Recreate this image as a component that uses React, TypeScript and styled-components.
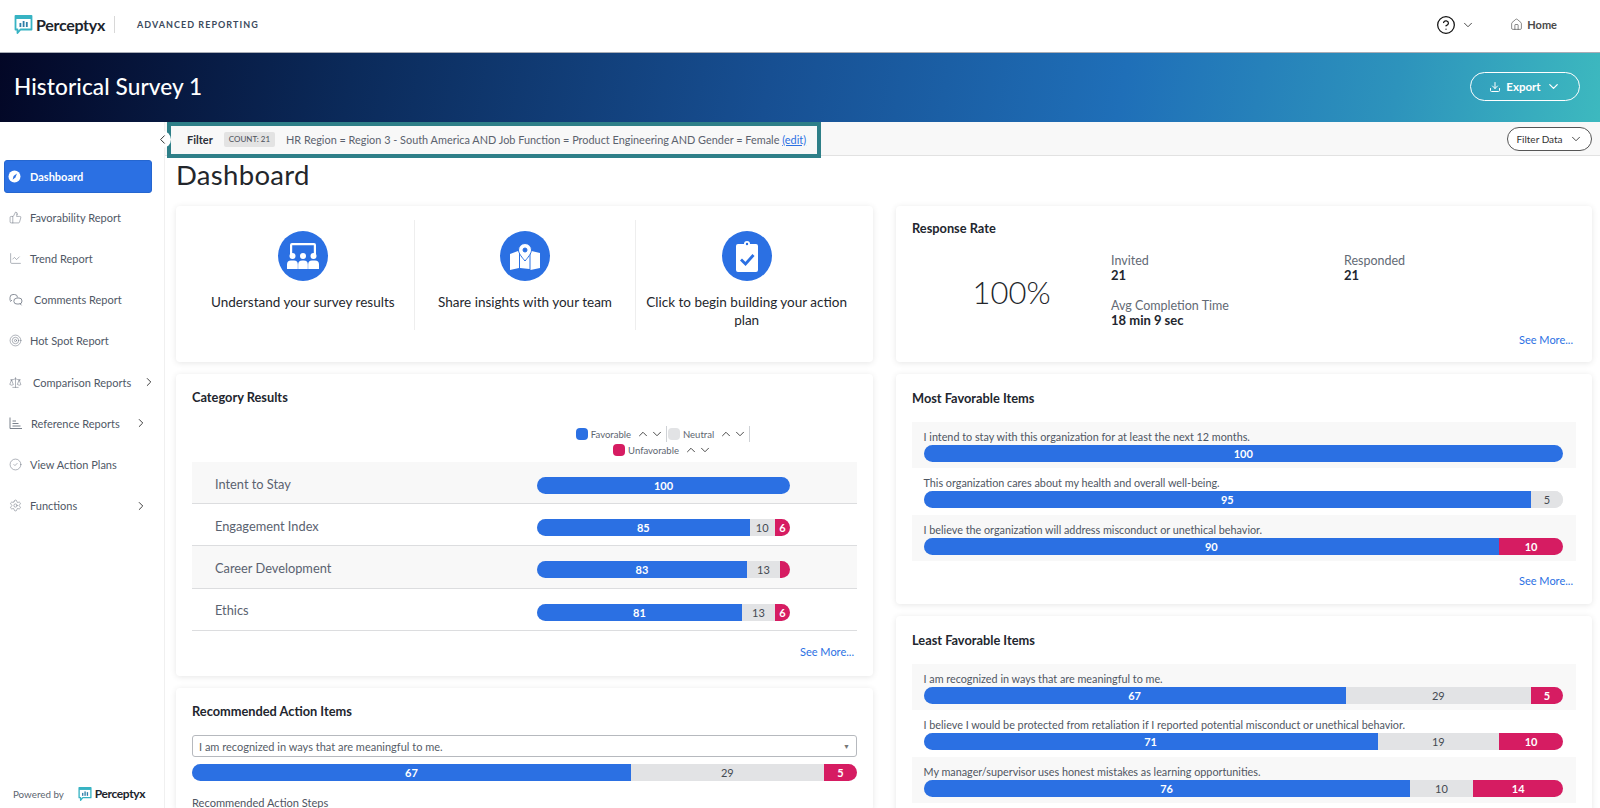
import React from "react";
import styled, { createGlobalStyle } from "styled-components";
import {
  ThumbsUp, ChartLine, Target, Scale, CircleCheck, Settings,
  House, Download, ChevronDown, ChevronUp, ChevronRight, ChevronLeft, CircleHelp,
} from "lucide-react";

const Global = createGlobalStyle`
  html, body { margin: 0; padding: 0; background: #fff; }
  body { font-family: Lato, "Liberation Sans", sans-serif; color: #22262e; }
  * { box-sizing: border-box; }
`;

const Page = styled.div`
  width: 1600px; height: 808px; overflow: hidden;
  display: flex; flex-direction: column;
`;
const TopBar = styled.header`
  height: 52px; flex: none; display: flex; align-items: center;
  padding: 0 43px 3px 14px; background: #fff;
`;
const Wordmark = styled.span<{ $size: number; $track: number }>`
  font-size: ${p => p.$size}px; font-weight: 700; color: #20242c; margin-left: 3px; letter-spacing: ${p => p.$track}px;
`;
const Divider = styled.span`
  width: 1px; height: 17px; background: #d8d8d8; margin: 0 22px 0 9px;
`;
const Product = styled.span`
  font-size: 9px; font-weight: 700; letter-spacing: 1.05px; color: #3b4a5c;
`;
const TopRight = styled.div`
  margin-left: auto; display: flex; align-items: center; color: #333;
`;
const HelpArrow = styled.span`
  display: flex; margin-left: 5px;
`;
const HomeLink = styled.span`
  display: flex; align-items: center; gap: 4px; margin-left: 35px;
  font-size: 11px; font-weight: 700; color: #4a4a4a;
`;
const Banner = styled.div`
  height: 70px; flex: none; display: flex; align-items: center; justify-content: space-between;
  padding: 0 20px 2px 14px; border-top: 1px solid #a9adb6;
  background: linear-gradient(100deg, #030726 0%, #0b2a5a 22%, #174f92 48%, #1f6fb8 70%, #2d93bc 87%, #3db9bf 100%);
`;
const BannerTitle = styled.h1`
  margin: 0; font-size: 22.6px; font-weight: 500; color: #fff; letter-spacing: 0.1px;
`;
const ExportButton = styled.button`
  width: 110px; height: 29px; border: 1px solid #fff; border-radius: 15px; background: transparent;
  display: flex; align-items: center; justify-content: center; gap: 5px;
  font: 700 11.5px Lato, sans-serif; color: #fff;
`;
const Body = styled.div`
  flex: 1; min-height: 0; display: flex;
`;
const Sidebar = styled.nav`
  width: 165px; flex: none; border-right: 1px solid #f0f0f0; position: relative;
  display: flex; flex-direction: column; padding: 38px 12px 7px 4px;
`;
const Collapse = styled.span`
  position: absolute; top: 9px; right: -7px; width: 17px; height: 17px; border-radius: 50%;
  background: #fff; display: flex; align-items: center; justify-content: center; color: #333; z-index: 2;
`;
const ActiveItem = styled.a`
  height: 33px; border-radius: 3px; background: #2b70e3; color: #fff; border: 1px solid #2566d0;
  display: flex; align-items: center; gap: 8px; padding-left: 2px; margin-bottom: 4px;
  font-size: 11px; font-weight: 700;
`;
const Item = styled.a<{ $wide?: boolean }>`
  height: 41.15px; flex: none; display: flex; align-items: center; gap: ${p => (p.$wide ? 11 : 8)}px; padding-left: 5px;
  font-size: 11px; color: #4f5866; white-space: nowrap;
  svg { flex: none; }
`;
const ItemArrow = styled.span`
  margin-left: auto; margin-right: 4px; display: flex; color: #333;
`;
const Footer = styled.div`
  margin-top: auto; display: flex; align-items: center; padding: 0 0 0 9px;
  font-size: 9.8px; color: #5d6570; white-space: nowrap;
`;
const FooterLogo = styled.span`
  display: flex; align-items: center; margin-left: 14px;
`;
const Main = styled.main`
  flex: 1; min-width: 0; display: flex; flex-direction: column;
`;
const FilterBar = styled.div`
  height: 34px; flex: none; background: #f8f8f8; border-bottom: 1px solid #e2e2e2;
  display: flex; align-items: flex-start; padding: 0 8px 0 2px;
`;
const FilterBox = styled.div`
  height: 36px; border: 4px solid #2e7f88; display: flex; align-items: center; padding: 0 11px 2px 16px;
  position: relative; z-index: 1; background: #f8f8f8;
`;
const FilterLabel = styled.b`
  font-size: 11px; color: #2c3038; margin-right: 11px;
`;
const Count = styled.span`
  background: #e3e3e3; border-radius: 2px; padding: 0 5px; height: 15px; line-height: 15px;
  font-size: 8px; color: #4a4f58; margin-right: 11px;
`;
const FilterText = styled.span`
  font-size: 10.9px; color: #5b626e; white-space: nowrap;
  a { color: #2b70e3; text-decoration: underline; }
`;
const FilterButton = styled.button`
  margin: 5px 0 0 auto; width: 85px; height: 24px; border: 1px solid #555; border-radius: 12px; background: #fff;
  display: flex; align-items: center; justify-content: center; gap: 6px;
  font: 400 10px Lato, sans-serif; color: #333;
`;
const Content = styled.div`
  flex: 1; min-height: 0; overflow: hidden; padding: 2px 8px 0 11px;
`;
const PageTitle = styled.h2`
  margin: 0 0 14px; font-size: 27.5px; line-height: 34px; font-weight: 400; color: #23262b; letter-spacing: 0.3px;
`;
const Columns = styled.div`
  display: grid; grid-template-columns: 697px 696px; gap: 23px;
`;
const Column = styled.div`
  display: flex; flex-direction: column; gap: 12px;
`;
const Card = styled.section<{ $h?: number; $pt?: number }>`
  background: #fff; border-radius: 4px; box-shadow: 0 1px 6px rgba(0,0,0,.1);
  padding: ${p => p.$pt ?? 16}px 16px 0;
  height: ${p => (p.$h ? `${p.$h}px` : "auto")};
  display: flex; flex-direction: column;
`;
const CardTitle = styled.h3`
  margin: 0; font-size: 12.8px; line-height: 16px; font-weight: 700; color: #22262e;
`;
const Actions = styled.div`
  display: grid; grid-template-columns: repeat(3, 1fr); margin-top: -2px; height: 110px;
`;
const Action = styled.div`
  display: flex; flex-direction: column; align-items: center; text-align: center; padding: 11px 6px 0;
  font-size: 13.5px; line-height: 18px; color: #24272d;
  & + & { border-left: 1px solid #eeeeee; }
`;
const ActionCircle = styled.span`
  width: 50px; height: 50px; border-radius: 50%; background: #2b70e3; display: flex;
  align-items: center; justify-content: center; margin-bottom: 12px; flex: none;
`;
const Response = styled.div`
  display: grid; grid-template-columns: 199px 233px 1fr; grid-auto-rows: 45px; margin-top: 18px; height: 75px;
`;
const BigNumber = styled.div`
  font-size: 31px; font-weight: 300; color: #23262b; text-align: center;
  align-self: center; grid-row: 1 / 3; margin: 0 0 14px;
`;
const Stat = styled.div`
  font-size: 12.5px; line-height: 14px; color: #636a75;
  b { display: block; color: #22262e; font-size: 13px; font-weight: 700; }
`;
const SeeMore = styled.a<{ $top: number }>`
  align-self: flex-end; font-size: 11px; line-height: 14px; color: #2b70e3; margin: ${p => p.$top}px 3px 0 0;
`;
const Legend = styled.div`
  display: grid; grid-template-columns: 1fr 253px; padding-right: 67px; margin: 21px 0 4px;
`;
const LegendInner = styled.div`
  grid-column: 2; display: flex; flex-wrap: wrap; justify-content: center; margin: 0 -10px;
`;
const LegendItem = styled.span<{ $sep?: boolean }>`
  height: 16px; display: flex; align-items: center; gap: 3px; padding: 0 2px 0 0; font-size: 9.5px; color: #5d6570;
  border-right: ${p => (p.$sep ? "1px solid #cfd2d6" : "none")};
  margin-right: ${p => (p.$sep ? 1 : 0)}px;
`;
const Swatch = styled.i<{ $c: string }>`
  width: 12px; height: 12px; border-radius: 4px; background: ${p => p.$c}; display: block;
`;
const Sorters = styled.span`
  display: flex; gap: 0; margin-left: 2px; color: #333;
`;
const CatRow = styled.div<{ $tint: boolean }>`
  height: 42.2px; flex: none; display: grid; grid-template-columns: 1fr 253px; align-items: center;
  padding: 0 67px 0 23px; background: ${p => (p.$tint ? "#f8f8f8" : "#fff")};
  border-bottom: 1px solid #dcdddf; font-size: 12.8px; color: #5a6270;
`;
const CatLabel = styled.span`
  margin-top: 2px;
`;
const CatBar = styled.div`
  margin-top: 6px;
`;
const Bar = styled.div`
  display: flex; height: 17px; border-radius: 9px; overflow: hidden; font-size: 11px; line-height: 17px;
  text-align: center; background: #e2e3e5;
`;
const Segment = styled.span<{ $c: "f" | "n" | "u" }>`
  min-width: 0; display: block;
  background: ${p => ({ f: "#2b70e3", n: "#e2e3e5", u: "#d61c62" }[p.$c])};
  color: ${p => (p.$c === "n" ? "#444a52" : "#fff")};
  font-weight: ${p => (p.$c === "n" ? 400 : 700)};
`;
const ItemList = styled.div`
  margin-top: 16px; display: flex; flex-direction: column;
`;
const ItemRow = styled.div<{ $tint: boolean }>`
  height: 46.3px; padding: 7px 13px 0 11.5px; background: ${p => (p.$tint ? "#f8f8f8" : "#fff")};
  font-size: 10.8px; line-height: 16px; color: #4f5662;
`;
const Select = styled.div`
  height: 22px; margin-top: 16px; border: 1px solid #b6b9be; border-radius: 3px; display: flex;
  align-items: center; justify-content: space-between; padding: 0 6px; font-size: 11px; color: #565d68;
`;
const Caret = styled.span`
  font-size: 7px; color: #777;
`;
const SpacedBar = styled.div`
  margin-top: 7px;
`;
const Steps = styled.div`
  margin-top: 14px; font-size: 11.1px; color: #4f5662; line-height: 15px;
`;

const Logo = ({ size }: { size: number }) => (
  <svg width={size} height={size} viewBox="0 0 18 19" fill="none" aria-hidden>
    <path d="M1 1h16v13.5H6L3 18v-3.5H1z" fill="#fff" stroke="#37b3c3" strokeWidth="1.8" strokeLinejoin="round" />
    <path d="M1 1h16v3H1z" fill="#37b3c3" />
    <rect x="5" y="8" width="1.8" height="4" fill="#2f7fa8" />
    <rect x="8.2" y="6" width="1.8" height="6" fill="#2f7fa8" />
    <rect x="11.4" y="7" width="1.8" height="5" fill="#2f7fa8" />
  </svg>
);
const Compass = () => (
  <svg width="15" height="15" viewBox="0 0 15 15" aria-hidden>
    <circle cx="7.5" cy="7.5" r="6" fill="#fff" />
    <path d="M10 4.500 8.400 8.600 5.600 10.800 6.600 7z" fill="#2b70e3" />
  </svg>
);
const CommentsIcon = () => (
  <svg width="14" height="14" viewBox="0 0 14 14" fill="none" stroke="#6c7480" strokeWidth="0.8" aria-hidden>
    <path d="M1 7.500V4.500A3 3 0 0 1 4 1.500h1.500a3 3 0 0 1 3 2.800M3 7.200 1 8.500" />
    <path d="M7.500 5h2.500a3 3 0 0 1 0 6H8a2.800 2.800 0 0 1-.5-5.800z" />
    <path d="M11 10.700l1.500 1.600" />
  </svg>
);
const ReferenceIcon = () => (
  <svg width="14" height="14" viewBox="0 0 14 14" fill="none" stroke="#6c7480" strokeWidth="0.9" aria-hidden>
    <path d="M1 1.500V12.500H13" />
    <path d="M3.500 5h3.500M3.500 7.500h6M3.500 10h8" />
  </svg>
);
const PresenterIcon = () => (
  <svg width="32" height="26" viewBox="0 0 32 26" fill="#fff" aria-hidden>
    <path d="M3 11V2a2 2 0 0 1 2-2h22a2 2 0 0 1 2 2v9h-2.200V2.200H5.200V11z" />
    <circle cx="5.500" cy="13" r="3" /><circle cx="16" cy="13" r="3" /><circle cx="26.500" cy="13" r="3" />
    <path d="M0 26v-4.500A4 4 0 0 1 4 17.500h3a4 4 0 0 1 3.800 4V26z" />
    <path d="M11.200 26v-4.500a4 4 0 0 1 4-4h1.600a4 4 0 0 1 4 4V26z" />
    <path d="M32 26v-4.500a4 4 0 0 0-4-4h-3a4 4 0 0 0-3.800 4V26z" />
  </svg>
);
const MapIcon = () => (
  <svg width="30" height="27" viewBox="0 0 30 27" fill="#fff" aria-hidden>
    <path d="M0 11l8-3 1 1v16L0 27z" />
    <path d="M10 10l5 7 4.500-7v16L10 25z" />
    <path d="M20.500 9l1-1L30 10v15l-9.500 2z" />
    <path fillRule="evenodd" stroke="#2b70e3" strokeWidth="1" d="M15 0.500a6.500 6.500 0 0 1 6.500 6.500c0 3.500-4 8-6.500 11-2.500-3-6.500-7.500-6.500-11A6.500 6.500 0 0 1 15 0.500zm0 4.500a2 2 0 1 0 0 4 2 2 0 0 0 0-4z" />
  </svg>
);
const ClipboardIcon = () => (
  <svg width="22" height="31" viewBox="0 0 22 31" aria-hidden>
    <path fill="#fff" fillRule="evenodd" d="M2 3h6a3 3 0 0 1 6 0h6a2 2 0 0 1 2 2v24a2 2 0 0 1-2 2H2a2 2 0 0 1-2-2V5a2 2 0 0 1 2-2zm9-1.200a1.200 1.200 0 1 0 0 2.400 1.200 1.200 0 0 0 0-2.400z" />
    <path d="M5 18.500l4.500 4.500 8-9" fill="none" stroke="#2b70e3" strokeWidth="2.800" />
  </svg>
);

type Seg = [number, "f" | "n" | "u", string?];
const Stack = ({ segs }: { segs: Seg[] }) => (
  <Bar>
    {segs.map(([v, c, label], i) => (
      <Segment key={i} $c={c} style={{ flex: `${v} 1 0` }}>{label ?? v}</Segment>
    ))}
  </Bar>
);

const Lucide = (I: typeof Target) => () => <I size={13} strokeWidth={1} color="#6c7480" />;
const nav = [
  { t: "Favorability Report", I: Lucide(ThumbsUp) },
  { t: "Trend Report", I: Lucide(ChartLine) },
  { t: "Comments Report", I: CommentsIcon, wide: true },
  { t: "Hot Spot Report", I: Lucide(Target) },
  { t: "Comparison Reports", I: Lucide(Scale), wide: true, arrow: true },
  { t: "Reference Reports", I: ReferenceIcon, arrow: true },
  { t: "View Action Plans", I: Lucide(CircleCheck) },
  { t: "Functions", I: Lucide(Settings), arrow: true },
];
const cats: { t: string; s: Seg[] }[] = [
  { t: "Intent to Stay", s: [[100, "f"]] },
  { t: "Engagement Index", s: [[84, "f", "85"], [10, "n"], [6, "u"]] },
  { t: "Career Development", s: [[83, "f"], [13, "n"], [4, "u", ""]] },
  { t: "Ethics", s: [[81, "f"], [13, "n"], [6, "u"]] },
];
const most: { t: string; s: Seg[] }[] = [
  { t: "I intend to stay with this organization for at least the next 12 months.", s: [[100, "f"]] },
  { t: "This organization cares about my health and overall well-being.", s: [[95, "f"], [5, "n"]] },
  { t: "I believe the organization will address misconduct or unethical behavior.", s: [[90, "f"], [10, "u"]] },
];
const least: { t: string; s: Seg[] }[] = [
  { t: "I am recognized in ways that are meaningful to me.", s: [[66, "f", "67"], [29, "n"], [5, "u"]] },
  { t: "I believe I would be protected from retaliation if I reported potential misconduct or unethical behavior.", s: [[71, "f"], [19, "n"], [10, "u"]] },
  { t: "My manager/supervisor uses honest mistakes as learning opportunities.", s: [[76, "f"], [10, "n"], [14, "u"]] },
];

const LegendEntry = ({ c, t, sep }: { c: string; t: string; sep?: boolean }) => (
  <LegendItem $sep={sep}>
    <Swatch $c={c} />{t}
    <Sorters>
      <ChevronUp size={14} strokeWidth={1.5} />
      <ChevronDown size={14} strokeWidth={1.5} />
    </Sorters>
  </LegendItem>
);

const Items = ({ rows }: { rows: { t: string; s: Seg[] }[] }) => (
  <ItemList>
    {rows.map((r, i) => (
      <ItemRow key={r.t} $tint={i % 2 === 0}>
        {r.t}
        <Stack segs={r.s} />
      </ItemRow>
    ))}
  </ItemList>
);

export default function App() {
  return (
    <Page>
      <Global />
      <TopBar>
        <Logo size={19} />
        <Wordmark $size={16} $track={-0.3}>Perceptyx</Wordmark>
        <Divider />
        <Product>ADVANCED REPORTING</Product>
        <TopRight>
          <CircleHelp size={20} strokeWidth={1.5} color="#111" />
          <HelpArrow><ChevronDown size={14} strokeWidth={1.5} /></HelpArrow>
          <HomeLink><House size={13} strokeWidth={1.2} />Home</HomeLink>
        </TopRight>
      </TopBar>
      <Banner>
        <BannerTitle>Historical Survey 1</BannerTitle>
        <ExportButton><Download size={12} />Export<ChevronDown size={15} /></ExportButton>
      </Banner>
      <Body>
        <Sidebar>
          <Collapse><ChevronLeft size={15} strokeWidth={1.6} /></Collapse>
          <ActiveItem><Compass />Dashboard</ActiveItem>
          {nav.map(({ t, I, wide, arrow }) => (
            <Item key={t} $wide={wide}>
              <I />
              {t}
              {arrow && <ItemArrow><ChevronRight size={14} strokeWidth={1.6} /></ItemArrow>}
            </Item>
          ))}
          <Footer>
            Powered by
            <FooterLogo><Logo size={14} /><Wordmark $size={12} $track={-0.4}>Perceptyx</Wordmark></FooterLogo>
          </Footer>
        </Sidebar>
        <Main>
          <FilterBar>
            <FilterBox>
              <FilterLabel>Filter</FilterLabel>
              <Count>COUNT: 21</Count>
              <FilterText>
                HR Region = Region 3 - South America AND Job Function = Product Engineering AND Gender = Female <a>(edit)</a>
              </FilterText>
            </FilterBox>
            <FilterButton>Filter Data<ChevronDown size={14} strokeWidth={1.5} /></FilterButton>
          </FilterBar>
          <Content>
            <PageTitle>Dashboard</PageTitle>
            <Columns>
              <Column>
                <Card $h={156}>
                  <Actions>
                    <Action><ActionCircle><PresenterIcon /></ActionCircle>Understand your survey results</Action>
                    <Action><ActionCircle><MapIcon /></ActionCircle>Share insights with your team</Action>
                    <Action><ActionCircle><ClipboardIcon /></ActionCircle>Click to begin building your action plan</Action>
                  </Actions>
                </Card>
                <Card $h={302} $pt={15}>
                  <CardTitle>Category Results</CardTitle>
                  <Legend>
                    <LegendInner>
                      <LegendEntry c="#2b70e3" t="Favorable" sep />
                      <LegendEntry c="#e2e3e5" t="Neutral" sep />
                      <LegendEntry c="#d61c62" t="Unfavorable" />
                    </LegendInner>
                  </Legend>
                  {cats.map((c, i) => (
                    <CatRow key={c.t} $tint={i % 2 === 0}>
                      <CatLabel>{c.t}</CatLabel>
                      <CatBar><Stack segs={c.s} /></CatBar>
                    </CatRow>
                  ))}
                  <SeeMore $top={14}>See More...</SeeMore>
                </Card>
                <Card $pt={15}>
                  <CardTitle>Recommended Action Items</CardTitle>
                  <Select>I am recognized in ways that are meaningful to me.<Caret>▼</Caret></Select>
                  <SpacedBar><Stack segs={[[66, "f", "67"], [29, "n"], [5, "u"]]} /></SpacedBar>
                  <Steps>Recommended Action Steps</Steps>
                </Card>
              </Column>
              <Column>
                <Card $h={156} $pt={14}>
                  <CardTitle>Response Rate</CardTitle>
                  <Response>
                    <BigNumber>100%</BigNumber>
                    <Stat>Invited<b>21</b></Stat>
                    <Stat>Responded<b>21</b></Stat>
                    <Stat>Avg Completion Time<b>18 min 9 sec</b></Stat>
                  </Response>
                  <SeeMore $top={4}>See More...</SeeMore>
                </Card>
                <Card $h={230}>
                  <CardTitle>Most Favorable Items</CardTitle>
                  <Items rows={most} />
                  <SeeMore $top={13}>See More...</SeeMore>
                </Card>
                <Card $h={220}>
                  <CardTitle>Least Favorable Items</CardTitle>
                  <Items rows={least} />
                </Card>
              </Column>
            </Columns>
          </Content>
        </Main>
      </Body>
    </Page>
  );
}
